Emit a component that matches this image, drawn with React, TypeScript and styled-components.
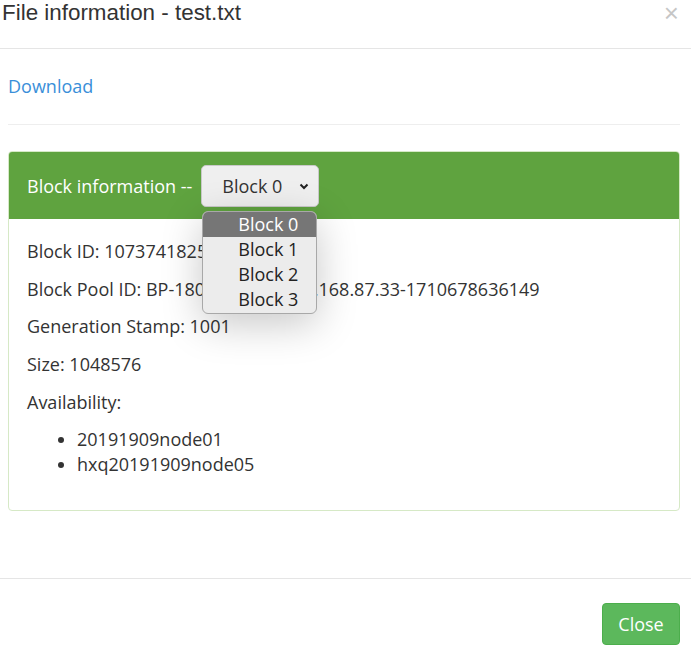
import styled, { createGlobalStyle } from "styled-components";

const GlobalStyle = createGlobalStyle`
  html, body {
    margin: 0;
    padding: 0;
    background: #ffffff;
  }
  body {
    font-family: "Open Sans", "Noto Sans", sans-serif;
    color: #333;
  }
`;

const blocks = ["Block 0", "Block 1", "Block 2", "Block 3"];

const App = () => {
  return (
    <>
      <GlobalStyle />
      <Modal>
        <Header>
          <Title>File information - test.txt</Title>
          <CloseX>×</CloseX>
        </Header>

        <Body>
          <DownloadLink href="#">Download</DownloadLink>
          <Rule />

          <Panel>
            <PanelHeading>
              <HeadingText>Block information --</HeadingText>
              <SelectWrap>
                <SelectBox>
                  <span>Block 0</span>
                  <Chevron viewBox="0 0 12 12">
                    <path d="M2.5 4.5 L6 8 L9.5 4.5" />
                  </Chevron>
                </SelectBox>
                <OptionList>
                  {blocks.map((b, i) => (
                    <OptionItem key={b} $selected={i === 0}>
                      {b}
                    </OptionItem>
                  ))}
                </OptionList>
              </SelectWrap>
            </PanelHeading>

            <PanelBody>
              <Line>Block ID: 1073741825</Line>
              <Line>Block Pool ID: BP-1806429478-192.168.87.33-1710678636149</Line>
              <Line>Generation Stamp: 1001</Line>
              <Line>Size: 1048576</Line>
              <Line>Availability:</Line>
              <NodeList>
                <li>20191909node01</li>
                <li>hxq20191909node05</li>
              </NodeList>
            </PanelBody>
          </Panel>
        </Body>

        <Footer>
          <CloseButton>Close</CloseButton>
        </Footer>
      </Modal>
    </>
  );
};

export default App;

const Modal = styled.div`
  width: 691px;
  background: #fff;
`;

const Header = styled.div`
  display: flex;
  justify-content: space-between;
  align-items: flex-start;
  height: 48px;
  padding: 0 10px 0 2px;
  border-bottom: 1px solid #e5e5e5;
`;

const Title = styled.h4`
  margin: 0;
  font-family: "Liberation Sans", Arial, sans-serif;
  font-weight: 400;
  font-size: 22.4px;
  line-height: 25px;
  color: #333;
`;

const CloseX = styled.span`
  font-family: "Liberation Sans", Arial, sans-serif;
  font-size: 26px;
  line-height: 26px;
  padding-right: 2px;
  color: #000;
  opacity: 0.22;
`;

const Body = styled.div`
  padding: 24px 11px 0 8px;
`;

const DownloadLink = styled.a`
  display: block;
  font-size: 18px;
  line-height: 26px;
  color: #3a8fd9;
  text-decoration: none;
`;

const Rule = styled.hr`
  margin: 25px 0 26px;
  border: 0;
  border-top: 1px solid #eee;
`;

const Panel = styled.div`
  border: 1px solid #d6e9c6;
  border-radius: 4px;
  margin-bottom: 67px;
`;

const PanelHeading = styled.div`
  display: flex;
  align-items: center;
  height: 67px;
  padding: 0 18px;
  background: #5fa33f;
  border-top-left-radius: 3px;
  border-top-right-radius: 3px;
`;

const HeadingText = styled.span`
  font-size: 18px;
  color: #fff;
  margin-right: 9px;
`;

const SelectWrap = styled.div`
  position: relative;
`;

const SelectBox = styled.div`
  display: flex;
  align-items: center;
  justify-content: space-between;
  box-sizing: border-box;
  width: 118px;
  height: 42px;
  padding: 0 8px 0 20px;
  background: #efefef;
  border: 1px solid #c9c9c9;
  border-radius: 5px;
  font-size: 18px;
  color: #333;
`;

const Chevron = styled.svg`
  width: 12px;
  height: 12px;
  fill: none;
  stroke: #222;
  stroke-width: 2;
`;

const OptionList = styled.ul`
  position: absolute;
  top: 46px;
  left: 1px;
  width: 115px;
  box-sizing: border-box;
  margin: 0;
  padding: 0 0 1px;
  list-style: none;
  background: #ececec;
  border: 1px solid #a8a8a8;
  border-radius: 6px;
  overflow: hidden;
  box-shadow: 0 10px 40px rgba(0, 0, 0, 0.22);
  z-index: 10;
`;

const OptionItem = styled.li<{ $selected?: boolean }>`
  height: 25px;
  line-height: 25px;
  padding-left: 35px;
  font-size: 18px;
  background: ${(p) => (p.$selected ? "#767676" : "transparent")};
  color: ${(p) => (p.$selected ? "#fff" : "#222")};
`;

const PanelBody = styled.div`
  padding: 20px 18px 23px;
  font-size: 18px;
  color: #333;
`;

const Line = styled.p`
  margin: 0 0 12.7px;
  line-height: 25px;
`;

const NodeList = styled.ul`
  margin: 0 0 10px;
  padding-left: 50px;
  line-height: 25px;
`;

const Footer = styled.div`
  display: flex;
  justify-content: flex-end;
  padding: 24px 11px 0 8px;
  border-top: 1px solid #e5e5e5;
`;

const CloseButton = styled.button`
  width: 78px;
  height: 42px;
  background: #5cb85c;
  border: 1px solid #4cae4c;
  border-radius: 4px;
  color: #fff;
  font-family: "Open Sans", "Noto Sans", sans-serif;
  font-size: 18px;
`;
